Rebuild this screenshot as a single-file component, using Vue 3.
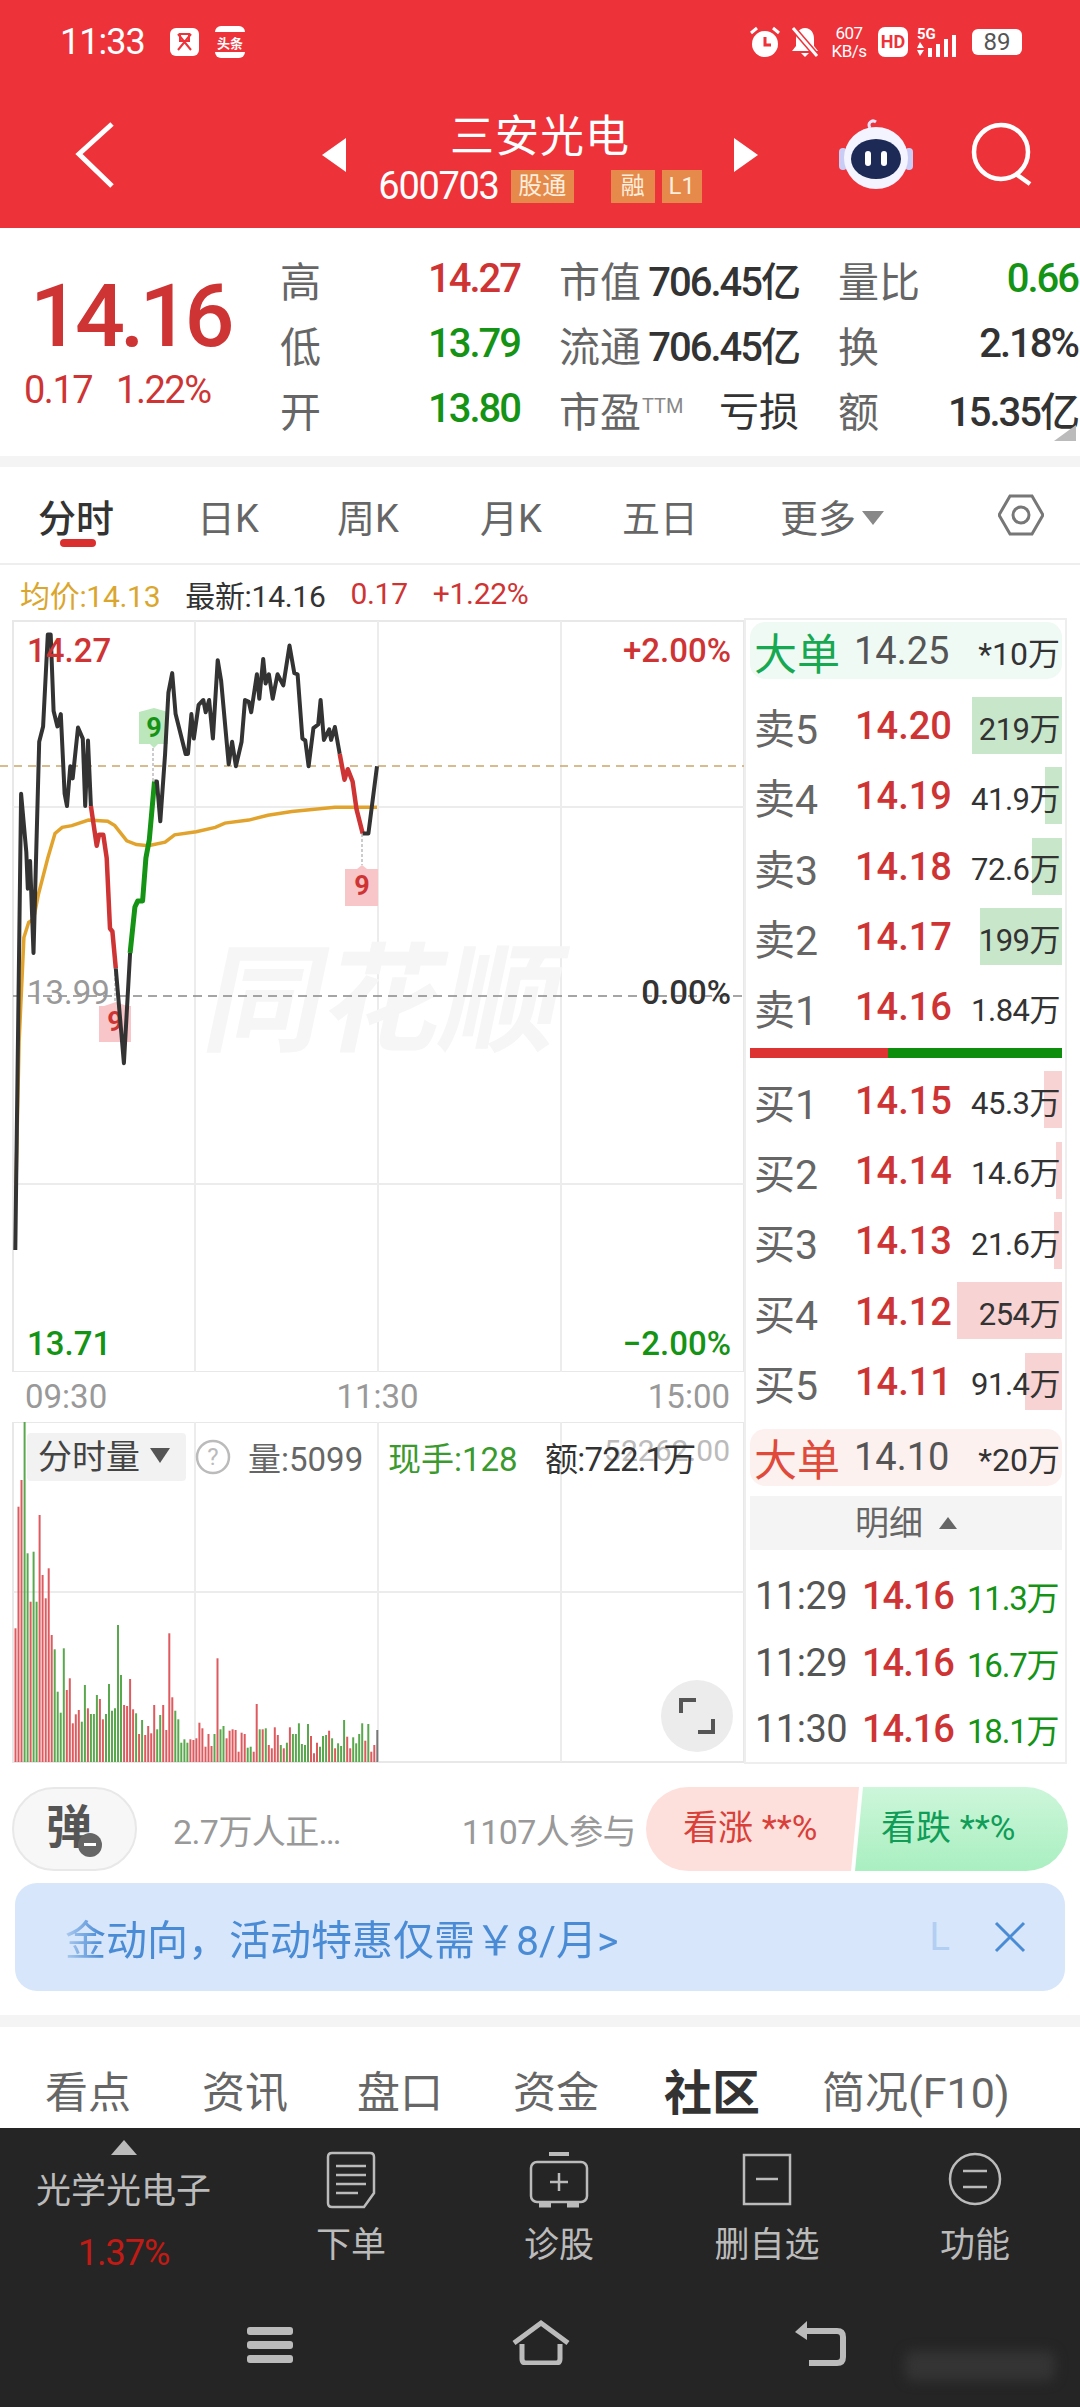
<template>
  <main class="app">
    <header class="head">
      <div class="status">
        <span class="clock">11:33</span>
        <svg class="app-icons" width="80" height="34" viewBox="0 0 80 34">
          <rect x="2" y="3" width="29" height="28" rx="6" fill="#fff" />
          <path d="M10 9l13 16M23 9L10 25M12 9h9v7h-9z" stroke="#ee3239" stroke-width="2" fill="none" />
          <rect x="47" y="1" width="30" height="32" rx="6" fill="#fff" />
          <rect x="47" y="7" width="30" height="20" fill="#ee3239" />
          <text x="62" y="23" class="toutiao">头条</text>
        </svg>
        <div class="status-right">
          <svg width="32" height="32" viewBox="0 0 32 32">
            <circle cx="16" cy="18" r="13" fill="#fff" />
            <path d="M16 11v8h6" stroke="#ee3239" stroke-width="3" fill="none" />
            <path d="M2 7l6-5M30 7l-6-5" stroke="#fff" stroke-width="3" />
          </svg>
          <svg class="bell" width="30" height="32" viewBox="0 0 30 32">
            <path d="M15 2c6 0 9 5 9 11v7l4 5H2l4-5v-7C6 7 9 2 15 2zM11 27h8l-4 4z" fill="#fff" />
            <path d="M3 2l24 28" stroke="#ee3239" stroke-width="6" />
            <path d="M3 2l24 28" stroke="#fff" stroke-width="3" />
          </svg>
          <div class="speed"><span>607</span><span>KB/s</span></div>
          <div class="hd">HD</div>
          <svg width="46" height="32" viewBox="0 0 46 32">
            <text x="0" y="13" class="five-g">5G</text>
            <path d="M3 16l4 6H0zM3 30l-3-6h7z" fill="#fff" />
            <rect x="11" y="22" width="4" height="9" fill="#fff" />
            <rect x="19" y="18" width="4" height="13" fill="#fff" />
            <rect x="27" y="13" width="4" height="18" fill="#fff" />
            <rect x="35" y="9" width="4" height="22" fill="#fff" />
          </svg>
          <div class="battery">89</div>
        </div>
      </div>
      <div class="nav">
        <svg class="back" width="40" height="66" viewBox="0 0 40 66">
          <path d="M37 2L4 32l33 32" fill="none" stroke="#fff" stroke-width="5" />
        </svg>
        <div class="stock">
          <svg width="24" height="34" viewBox="0 0 24 34"><path d="M24 0v34L0 17z" fill="#fff" /></svg>
          <div class="stock-mid">
            <div class="stock-name">三安光电</div>
            <div class="stock-code">
              <span class="code">600703</span>
              <span class="tag tag-wide">股通</span>
              <span class="tag tag-gap">融</span>
              <span class="tag">L1</span>
            </div>
          </div>
          <svg width="24" height="34" viewBox="0 0 24 34"><path d="M0 0v34l24-17z" fill="#fff" /></svg>
        </div>
        <div class="nav-tools">
          <svg width="76" height="72" viewBox="0 0 76 72">
            <path d="M32 10c-3-5 2-9 6-6" stroke="#dfe3fb" stroke-width="3" fill="none" />
            <rect x="1" y="30" width="8" height="22" rx="4" fill="#c9cdf5" />
            <rect x="67" y="30" width="8" height="22" rx="4" fill="#c9cdf5" />
            <ellipse cx="38" cy="40" rx="32" ry="31" fill="#f3f4ff" />
            <ellipse cx="38" cy="41" rx="25" ry="20" fill="#1c2a55" />
            <rect x="27" y="33" width="6" height="15" rx="3" fill="#fff" />
            <rect x="43" y="33" width="6" height="15" rx="3" fill="#fff" />
          </svg>
          <svg width="66" height="66" viewBox="0 0 66 66">
            <circle cx="31" cy="31" r="27" fill="none" stroke="#fff" stroke-width="4.5" />
            <path d="M46 53l14 10" stroke="#fff" stroke-width="4.5" />
          </svg>
        </div>
      </div>
    </header>

    <section class="quote">
      <div class="last">
        <div class="last-price">14.16</div>
        <div class="last-sub"><span>0.17</span><span>1.22%</span></div>
      </div>
      <div class="stats">
        <div v-for="s in stats" :key="s.label" class="stat">
          <span class="stat-label">{{ s.label }}<sup v-if="s.sup">{{ s.sup }}</sup></span>
          <span class="stat-value" :class="s.color">{{ s.value }}</span>
        </div>
      </div>
      <span class="corner"></span>
    </section>

    <nav class="period">
      <span v-for="(t, i) in periods" :key="t" class="period-item" :class="{ on: i === 0 }">{{ t }}</span>
      <span class="period-item more">更多<i class="caret"></i></span>
      <svg width="46" height="46" viewBox="0 0 46 46">
        <path d="M12 4h22l11 19-11 19H12L1 23z" fill="none" stroke="#777" stroke-width="3" />
        <circle cx="23" cy="23" r="8" fill="none" stroke="#777" stroke-width="3" />
      </svg>
    </nav>

    <div class="legend">
      <span class="gold">均价:14.13</span>
      <span class="dark">最新:14.16</span>
      <span class="red">0.17</span>
      <span class="red">+1.22%</span>
    </div>

    <section class="market">
      <div class="left">
        <svg class="chart" width="744" height="754" viewBox="0 618 744 754">
          <rect x="13" y="621" width="731" height="751" fill="none" stroke="#e8e8e8" stroke-width="2" />
          <path d="M195 621v751M378 621v751M561 621v751M13 807h731M13 1184h731" stroke="#ececec" stroke-width="2" />
          <text class="mark-text" transform="translate(200 1042) skewX(-12)">同花顺</text>
          <path d="M0 766h744" stroke="#c9a66b" stroke-width="1.5" stroke-dasharray="8 6" />
          <path d="M13 996h731" stroke="#888" stroke-width="1.5" stroke-dasharray="9 6" />
          <path d="M153 748v36M115 968v34M362 834v31" stroke="#999" stroke-width="1" stroke-dasharray="3 2" />
          <path d="M139 712l15-4 14 4v32h-10l-4 4-4-4h-11z" fill="#bce6bc" />
          <path d="M99 1006l5 0 12-4 11 4h4v36H99z" fill="#f8c6c8" />
          <path d="M345 869l12-0 5-4 5 4h11v37h-33z" fill="#f8c6c8" />
          <text x="154" y="737" class="nine green">9</text>
          <text x="115" y="1031" class="nine red">9</text>
          <text x="362" y="895" class="nine red">9</text>
          <path :d="avgPath" fill="none" stroke="#e2a32d" stroke-width="3.5" />
          <path v-for="(seg, i) in priceSegs" :key="i" :d="seg.d" fill="none" :stroke="seg.color" :stroke-width="seg.w" stroke-linejoin="round" />
          <text x="27" y="662" class="axis red">14.27</text>
          <text x="27" y="1004" class="axis grey">13.99</text>
          <text x="27" y="1355" class="axis green">13.71</text>
          <text x="731" y="662" class="axis red end">+2.00%</text>
          <text x="731" y="1004" class="axis dark end">0.00%</text>
          <text x="731" y="1355" class="axis green end">−2.00%</text>
        </svg>
        <div class="times"><span>09:30</span><span>11:30</span><span>15:00</span></div>
        <div class="volume">
          <svg class="vol-chart" width="744" height="341" viewBox="0 1422 744 341">
            <rect x="13" y="1422" width="731" height="340" fill="none" stroke="#e8e8e8" stroke-width="2" />
            <path d="M195 1422v340M378 1422v340M561 1422v340M13 1592h731" stroke="#ececec" stroke-width="2" />
            <path v-for="(b, i) in volBars" :key="i" :d="b.d" :stroke="b.color" stroke-width="2" />
          </svg>
          <div class="vol-head">
            <div class="vol-pick">分时量<i class="caret dark-caret"></i></div>
            <svg class="help" width="36" height="36" viewBox="0 0 36 36">
              <circle cx="18" cy="18" r="16" fill="none" stroke="#bbb" stroke-width="2.5" />
              <text x="18" y="26" class="help-q">?</text>
            </svg>
            <span class="vol-num">量:5099</span>
            <span class="vol-now">现手:128</span>
            <span class="vol-amt">额:722.1万</span>
            <span class="vol-ghost">52262.00</span>
          </div>
          <div class="expand">
            <svg width="36" height="38" viewBox="0 0 36 38">
              <path d="M2 16V3h15M34 22v13H19" fill="none" stroke="#555" stroke-width="4" />
            </svg>
          </div>
        </div>
      </div>

      <aside class="panel">
        <div class="big big-buy"><b>大单</b><span class="big-price">14.25</span><span class="big-vol">*10万</span></div>
        <div class="book book-first">
          <div v-for="r in sells" :key="r.name" class="book-row">
            <i class="depth depth-sell" :style="{ width: r.depth + 'px' }"></i>
            <span class="book-name">{{ r.name }}</span>
            <span class="book-price">{{ r.price }}</span>
            <span class="book-vol">{{ r.vol }}</span>
          </div>
        </div>
        <div class="ratio"><i></i></div>
        <div class="book">
          <div v-for="r in buys" :key="r.name" class="book-row">
            <i class="depth depth-buy" :style="{ width: r.depth + 'px' }"></i>
            <span class="book-name">{{ r.name }}</span>
            <span class="book-price">{{ r.price }}</span>
            <span class="book-vol">{{ r.vol }}</span>
          </div>
        </div>
        <div class="big big-sell"><b>大单</b><span class="big-price">14.10</span><span class="big-vol">*20万</span></div>
        <div class="detail-head">明细<i class="up"></i></div>
        <div class="detail">
          <div v-for="d in ticks" :key="d.vol" class="tick">
            <span class="tick-time">{{ d.time }}</span>
            <span class="tick-price">14.16</span>
            <span class="tick-vol">{{ d.vol }}</span>
          </div>
        </div>
      </aside>
    </section>

    <section class="vote-row">
      <div class="danmu">
        <span>弹</span>
        <i class="danmu-off"></i>
      </div>
      <span class="hot">2.7万人正…</span>
      <span class="join">1107人参与</span>
      <div class="vote">
        <div class="vote-up">看涨 **%</div>
        <div class="vote-down">看跌 **%</div>
      </div>
    </section>

    <section class="banner">
      <span class="banner-text">金动向，活动特惠仅需￥8/月&gt;</span>
      <span class="banner-ghost">L</span>
      <svg width="32" height="32" viewBox="0 0 32 32">
        <path d="M2 2l28 28M30 2L2 30" stroke="#4a8bd6" stroke-width="3" />
      </svg>
    </section>

    <div class="gap"></div>

    <nav class="sections">
      <span v-for="(s, i) in sections" :key="s" :class="{ active: i === 4 }">{{ s }}</span>
    </nav>

    <section class="toolbar">
      <div class="sector">
        <i class="sector-up"></i>
        <span class="sector-name">光学光电子</span>
        <span class="sector-pct">1.37%</span>
      </div>
      <div class="tool">
        <svg width="50" height="58" viewBox="0 0 50 58">
          <path d="M6 2h38q4 0 4 4v36L38 56H6q-4 0-4-4V6q0-4 4-4z" fill="none" stroke="#bbb" stroke-width="2.5" />
          <path d="M10 15h30M10 24h30M10 33h30M10 42h22" stroke="#bbb" stroke-width="2.5" />
        </svg>
        <span>下单</span>
      </div>
      <div class="tool">
        <svg width="60" height="58" viewBox="0 0 60 58">
          <path d="M20 3h20" stroke="#bbb" stroke-width="4" />
          <rect x="2" y="11" width="56" height="40" rx="6" fill="none" stroke="#bbb" stroke-width="2.5" />
          <path d="M10 54h12M38 54h12" stroke="#bbb" stroke-width="5" />
          <path d="M30 22v18M21 31h18" stroke="#bbb" stroke-width="2.5" />
        </svg>
        <span>诊股</span>
      </div>
      <div class="tool">
        <svg width="50" height="58" viewBox="0 0 50 58">
          <rect x="2" y="4" width="46" height="49" fill="none" stroke="#bbb" stroke-width="2.5" />
          <path d="M14 28h22" stroke="#bbb" stroke-width="2.5" />
        </svg>
        <span>删自选</span>
      </div>
      <div class="tool">
        <svg width="54" height="58" viewBox="0 0 54 58">
          <circle cx="27" cy="28" r="25" fill="none" stroke="#bbb" stroke-width="2.5" />
          <path d="M15 20h24M15 36h24" stroke="#bbb" stroke-width="2.5" />
        </svg>
        <span>功能</span>
      </div>
    </section>

    <footer class="sysnav">
      <svg width="48" height="38" viewBox="0 0 48 38">
        <rect x="1" y="1" width="46" height="8" rx="3" fill="#bbb" />
        <rect x="1" y="15" width="46" height="8" rx="3" fill="#bbb" />
        <rect x="1" y="29" width="46" height="8" rx="3" fill="#bbb" />
      </svg>
      <svg width="60" height="46" viewBox="0 0 60 46">
        <path d="M3 23L30 3l27 20" fill="none" stroke="#bbb" stroke-width="5" transform="translate(0 1)" />
        <path d="M11 25v15q0 4 4 4h30q4 0 4-4V25" fill="none" stroke="#bbb" stroke-width="5" />
      </svg>
      <svg width="52" height="46" viewBox="0 0 52 46">
        <path d="M12 0L0 11l12 8z" fill="#bbb" />
        <path d="M10 10h32q6 0 6 6v20q0 6-6 6H14" fill="none" stroke="#bbb" stroke-width="6" />
      </svg>
      <span class="stamp"></span>
    </footer>
  </main>
</template>

<script setup>
const stats = [
  { label: '高', value: '14.27', color: 'red' },
  { label: '市值', value: '706.45亿', color: 'dark' },
  { label: '量比', value: '0.66', color: 'green' },
  { label: '低', value: '13.79', color: 'green' },
  { label: '流通', value: '706.45亿', color: 'dark' },
  { label: '换', value: '2.18%', color: 'dark' },
  { label: '开', value: '13.80', color: 'green' },
  { label: '市盈', sup: 'TTM', value: '亏损', color: 'dark cjk' },
  { label: '额', value: '15.35亿', color: 'dark' }
]

const periods = ['分时', '日K', '周K', '月K', '五日']
const sections = ['看点', '资讯', '盘口', '资金', '社区', '简况(F10)']

const sells = [
  { name: '卖5', price: '14.20', vol: '219万', depth: 90 },
  { name: '卖4', price: '14.19', vol: '41.9万', depth: 17 },
  { name: '卖3', price: '14.18', vol: '72.6万', depth: 30 },
  { name: '卖2', price: '14.17', vol: '199万', depth: 82 },
  { name: '卖1', price: '14.16', vol: '1.84万', depth: 0 }
]
const buys = [
  { name: '买1', price: '14.15', vol: '45.3万', depth: 18 },
  { name: '买2', price: '14.14', vol: '14.6万', depth: 6 },
  { name: '买3', price: '14.13', vol: '21.6万', depth: 8 },
  { name: '买4', price: '14.12', vol: '254万', depth: 105 },
  { name: '买5', price: '14.11', vol: '91.4万', depth: 37 }
]
const ticks = [
  { time: '11:29', vol: '11.3万' },
  { time: '11:29', vol: '16.7万' },
  { time: '11:30', vol: '18.1万' }
]

// points were read off a zoomed crop, so scale them back to page pixels
const toPath = pts => 'M' + pts.map(([x, y]) => `${(x / 2.09).toFixed(1)} ${(460 + y / 1.633).toFixed(1)}`).join('L')

const black = '#333'
const red = '#cf3434'
const green = '#149314'
const priceSegs = [
  { color: black, w: 4, pts: [[32, 1290], [44, 545], [55, 640], [58, 700], [63, 655], [70, 805], [82, 460], [90, 435], [100, 285], [106, 285], [112, 410], [120, 435], [127, 415], [135, 545], [140, 565], [147, 500], [152, 520], [163, 437], [173, 455], [178, 565], [184, 458], [190, 565]] },
  { color: red, w: 4.5, pts: [[190, 565], [202, 630], [207, 612], [216, 612], [223, 650], [230, 765], [235, 770], [242, 830]] },
  { color: black, w: 4, pts: [[242, 830], [259, 985], [272, 805]] },
  { color: green, w: 5, pts: [[272, 805], [282, 730], [288, 720], [298, 720], [305, 650], [312, 620], [323, 525]] },
  { color: black, w: 4, pts: [[323, 525], [328, 525], [335, 590], [345, 480], [352, 380], [360, 348], [367, 415], [388, 480], [393, 480], [400, 415], [405, 455], [415, 400], [425, 392], [430, 412], [437, 392], [445, 455], [455, 327], [462, 360], [478, 497], [485, 460], [493, 500], [505, 460], [512, 392], [520, 395], [525, 412], [537, 350], [542, 390], [550, 325], [555, 365], [562, 350], [570, 390], [580, 350], [592, 368], [605, 303], [615, 348], [622, 350], [632, 455], [638, 458], [645, 500], [655, 438], [665, 432], [670, 392], [677, 457], [688, 440], [692, 457], [700, 436], [710, 480]] },
  { color: red, w: 4.5, pts: [[710, 480], [720, 522], [727, 505], [737, 525], [745, 570], [758, 610]] },
  { color: black, w: 4, pts: [[758, 610], [770, 610], [788, 500]] }
].map(s => ({ color: s.color, w: s.w, d: toPath(s.pts) }))

const avgPath = toPath([[33, 1200], [40, 950], [50, 780], [60, 755], [70, 750], [80, 710], [100, 650], [115, 610], [130, 600], [150, 597], [185, 588], [225, 590], [240, 597], [265, 622], [285, 628], [310, 630], [345, 624], [365, 612], [410, 607], [450, 600], [470, 593], [520, 588], [560, 580], [610, 574], [700, 567], [788, 567]])

// tops of the volume bars, from the same kind of crop: r = up, g = down, k = flat
const volTops = 'r745 r380 r300 g125 g520 r665 g515 g665 r405 r585 r655 r565 r765 g808 g935 g998 g805 r930 r895 r1030 r1003 r990 g1025 g915 r985 g1002 g1002 g945 r957 r1018 g1002 g912 g992 g985 g735 g885 r975 r978 r897 r988 g1000 r1062 g1020 r1065 r1038 r1060 r975 g1048 g1005 r975 r1050 r760 r952 g992 g1018 g1088 g1078 g1088 r1078 r1080 r1075 r1028 r1045 r1100 r1062 r1098 g1062 r835 g1048 g1038 r1075 r1052 r1048 r1050 r1115 r1058 r1062 g1103 g1100 r1115 r972 g1048 r1048 g1045 r1095 r1105 r1042 r1065 g1095 r1105 g1088 r1042 g1062 g1062 g1030 g1092 g1095 g1032 r1068 r1120 r1088 g1100 g1068 g1065 r1052 g1075 r1105 g1090 g1098 g1020 r1070 r1105 g1072 g1090 g1062 g1030 r1082 g1032 r1115 r1095 k1050'
const volColors = { r: '#de5a5f', g: '#5aa84e', k: '#777' }
const volBars = volTops.split(' ').map((t, i) => {
  const x = ((32 + i * 6.22) / 2.063).toFixed(1)
  const top = (1380 + Number(t.slice(1)) / 3).toFixed(1)
  return { d: `M${x} ${top}V1762`, color: volColors[t[0]] }
})
</script>

<style>
html,
body {
  margin: 0;
  background: #fff;
}
</style>

<style scoped>
.app {
  width: 1080px;
  height: 2408px;
  overflow: hidden;
  background: #fff;
  color: #333;
  font-family: Roboto, "Noto Sans CJK SC", sans-serif;
}

.red { color: #cf3434; fill: #cf3434; }
.green { color: #149314; fill: #149314; }
.dark { color: #333; fill: #333; }
.grey { fill: #999; }
.gold { color: #dba62e; }

/* header */
.head {
  height: 228px;
  background: #ee3239;
  color: #fff;
}
.status {
  height: 84px;
  display: flex;
  align-items: center;
  padding: 0 60px;
}
.clock {
  font-size: 36px;
  letter-spacing: -1px;
  width: 108px;
}
.toutiao {
  font-size: 13px;
  font-weight: 700;
  fill: #fff;
  text-anchor: middle;
}
.status-right {
  margin-left: auto;
  display: flex;
  align-items: center;
  gap: 9px;
  margin-right: -2px;
}
.speed {
  display: flex;
  flex-direction: column;
  align-items: center;
  font-size: 17px;
  line-height: 18px;
  letter-spacing: -0.5px;
  width: 40px;
}
.hd {
  width: 30px;
  height: 30px;
  line-height: 30px;
  border-radius: 7px;
  background: #fff;
  color: #ee3239;
  font-size: 18px;
  font-weight: 700;
  text-align: center;
}
.five-g {
  font-size: 15px;
  font-weight: 700;
  fill: #fff;
}
.battery {
  width: 50px;
  height: 26px;
  line-height: 26px;
  border-radius: 6px;
  background: #fff;
  color: #555;
  font-size: 24px;
  text-align: center;
}
.nav {
  display: grid;
  grid-template-columns: 322px 436px 1fr;
  height: 144px;
  align-items: start;
}
.back {
  margin: 38px 0 0 75px;
}
.stock {
  display: flex;
  justify-content: space-between;
  align-items: center;
  height: 114px;
  padding-top: 14px;
}
.stock-mid {
  display: flex;
  flex-direction: column;
  align-items: center;
}
.stock-name {
  font-size: 44px;
  line-height: 60px;
  letter-spacing: 1px;
}
.stock-code {
  display: flex;
  align-items: center;
  margin-top: 2px;
  height: 34px;
}
.code {
  font-size: 38px;
  letter-spacing: -1.3px;
  margin-right: 12px;
}
.tag {
  height: 33px;
  line-height: 33px;
  min-width: 34px;
  padding: 0 3px;
  margin-left: 7px;
  background: #e68a4b;
  color: #fdeedd;
  font-size: 24px;
  text-align: center;
}
.tag-wide {
  width: 57px;
  margin-left: 0;
}
.tag-gap {
  width: 38px;
  margin-left: 37px;
}
.nav-tools {
  display: flex;
  align-items: center;
  gap: 56px;
  padding: 34px 0 0 80px;
}

/* quote */
.quote {
  position: relative;
  display: flex;
  height: 228px;
  box-sizing: border-box;
  border-bottom: 11px solid #f4f4f4;
  height: 239px;
}
.last {
  width: 280px;
  padding-top: 40px;
  color: #cf3434;
}
.last-price {
  margin-left: 30px;
  font-size: 88px;
  line-height: 96px;
  font-weight: 500;
  letter-spacing: -5px;
}
.last-sub {
  display: flex;
  gap: 24px;
  margin: 4px 0 0 24px;
  font-size: 38px;
  line-height: 44px;
  letter-spacing: -1.5px;
}
.stats {
  display: grid;
  grid-template-columns: 240px 240px 240px;
  column-gap: 39px;
  grid-auto-rows: 65px;
  padding-top: 18px;
}
.stat {
  display: flex;
  justify-content: space-between;
  align-items: center;
}
.stat-label {
  color: #666;
  font-size: 41px;
}
.stat-label sup {
  font-size: 20px;
  color: #888;
  vertical-align: 14px;
  line-height: 0;
  margin-left: 1px;
}
.stat-value {
  font-size: 40px;
  font-weight: 500;
  letter-spacing: -2px;
}
.stat-value.cjk {
  letter-spacing: 0;
  font-weight: 400;
}
.corner {
  position: absolute;
  right: 4px;
  top: 197px;
  border-style: solid;
  border-width: 0 0 16px 22px;
  border-color: transparent transparent #bbb transparent;
}

/* period tabs */
.period {
  display: grid;
  grid-template-columns: 159px 140px 143px 142px 158px 218px 46px;
  align-items: center;
  height: 98px;
  padding-left: 38px;
  box-sizing: border-box;
  border-bottom: 2px solid #eee;
}
.period-item {
  position: relative;
  font-size: 38px;
  color: #666;
  white-space: nowrap;
}
.period-item.on {
  color: #333;
  font-weight: 500;
}
.period-item.on::after {
  content: "";
  position: absolute;
  left: 22px;
  top: 51px;
  width: 36px;
  height: 8px;
  border-radius: 4px;
  background: #d9302f;
}
.caret {
  display: inline-block;
  margin-left: 6px;
  vertical-align: 7px;
  border-style: solid;
  border-width: 14px 11px 0;
  border-color: #888 transparent transparent;
}
.dark-caret {
  border-color: #555 transparent transparent;
  border-width: 15px 10px 0;
  vertical-align: 6px;
  margin-left: 10px;
}

.legend {
  display: flex;
  height: 53px;
  align-items: center;
  font-size: 30px;
  padding: 4px 0 0 20px;
  box-sizing: border-box;
}
.legend span {
  margin-right: 25px;
  letter-spacing: -0.3px;
}

/* chart + order book */
.market {
  display: flex;
  height: 1145px;
}
.left {
  width: 744px;
  flex: none;
}
.chart,
.vol-chart {
  display: block;
}
.axis {
  font-size: 33px;
  font-weight: 500;
}
.axis.grey {
  font-weight: 400;
}
.axis.end {
  text-anchor: end;
}
.nine {
  font-size: 27px;
  font-weight: 700;
  text-anchor: middle;
}
.mark-text {
  font-size: 118px;
  font-weight: 700;
  fill: #f6f6f6;
}
.times {
  display: flex;
  justify-content: space-between;
  height: 50px;
  line-height: 50px;
  padding: 0 14px 0 25px;
  color: #999;
  font-size: 33px;
}
.volume {
  position: relative;
}
.vol-head {
  position: absolute;
  left: 27px;
  top: 11px;
  right: 0;
  display: flex;
  align-items: center;
  height: 48px;
  white-space: nowrap;
  font-size: 33px;
}
.vol-pick {
  width: 159px;
  height: 48px;
  line-height: 48px;
  padding-left: 11px;
  box-sizing: border-box;
  background: #f2f2f2;
  border-radius: 4px;
  color: #444;
  font-size: 34px;
}
.help {
  margin-left: 9px;
}
.help-q {
  font-size: 24px;
  fill: #bbb;
  text-anchor: middle;
}
.vol-num {
  position: absolute;
  left: 221px;
  color: #666;
}
.vol-now {
  position: absolute;
  left: 361px;
  color: #3a9a2e;
}
.vol-amt {
  position: absolute;
  left: 518px;
  color: #333;
  z-index: 1;
  letter-spacing: -0.8px;
}
.vol-ghost {
  position: absolute;
  right: 14px;
  top: 0;
  color: #bbb;
  font-size: 30px;
}
.expand {
  position: absolute;
  left: 661px;
  top: 258px;
  width: 72px;
  height: 72px;
  border-radius: 50%;
  background: #ececec;
  display: flex;
  align-items: center;
  justify-content: center;
}

.panel {
  width: 323px;
  flex: none;
  box-sizing: border-box;
  height: 1146px;
  border: 2px solid #eee;
  padding: 2px 3px 0 4px;
}
.big {
  display: flex;
  align-items: center;
  height: 57px;
  border-radius: 15px;
  padding: 0 2px 0 4px;
  white-space: nowrap;
}
.big b {
  font-weight: 400;
  font-size: 43px;
}
.big-price {
  margin-left: 14px;
  width: 100px;
  color: #555;
  font-size: 38px;
}
.big-vol {
  margin-left: auto;
  color: #333;
  font-size: 32px;
}
.big-buy {
  background: #f0faf5;
}
.big-buy b {
  color: #17a852;
}
.big-sell {
  background: #fdf1f0;
  margin-top: 12px;
}
.big-sell b {
  color: #e04a3a;
}
.book-first {
  margin-top: 12px;
}
.book-row {
  position: relative;
  display: flex;
  align-items: center;
  height: 70.3px;
  padding: 0 2px 0 4px;
  white-space: nowrap;
}
.depth {
  position: absolute;
  right: 0;
  top: 6px;
  height: 57px;
}
.depth-sell {
  background: #c8e6c9;
}
.depth-buy {
  background: #f8d3d3;
}
.book-name {
  position: relative;
  width: 101px;
  color: #666;
  font-size: 41px;
}
.book-price {
  position: relative;
  color: #cf3434;
  font-size: 38px;
  font-weight: 500;
}
.book-vol {
  position: relative;
  margin-left: auto;
  color: #333;
  font-size: 31px;
  letter-spacing: -0.5px;
}
.ratio {
  height: 10px;
  margin-top: 6px;
  margin-bottom: 7px;
  background: #0d8f0d;
}
.ratio i {
  display: block;
  width: 138px;
  height: 100%;
  background: #dd3333;
}
.detail-head {
  height: 54px;
  line-height: 54px;
  margin-top: 10px;
  background: #f4f4f4;
  color: #666;
  font-size: 34px;
  text-align: center;
}
.up {
  display: inline-block;
  margin-left: 16px;
  vertical-align: 6px;
  border-style: solid;
  border-width: 0 9px 12px;
  border-color: transparent transparent #666;
}
.detail {
  margin-top: 13px;
}
.tick {
  display: flex;
  align-items: center;
  height: 66.5px;
  padding-left: 5px;
  white-space: nowrap;
}
.tick-time {
  width: 107px;
  color: #555;
  font-size: 38px;
  letter-spacing: -0.5px;
}
.tick-price {
  width: 105px;
  color: #cf3434;
  font-size: 38px;
  letter-spacing: -1px;
  font-weight: 500;
}
.tick-vol {
  color: #149314;
  font-size: 33px;
  letter-spacing: -1.2px;
}

/* vote + banner */
.vote-row {
  display: flex;
  align-items: center;
  height: 84px;
  margin-top: 24px;
  padding: 0 12px;
  white-space: nowrap;
  font-size: 34px;
  color: #999;
}
.danmu {
  position: relative;
  width: 125px;
  height: 84px;
  box-sizing: border-box;
  border: 2px solid #e8e8e8;
  border-radius: 42px;
  background: #f7f7f7;
  color: #555;
  font-size: 46px;
  font-weight: 700;
  line-height: 76px;
  padding-left: 32px;
}
.danmu-off {
  position: absolute;
  left: 64px;
  top: 44px;
  width: 24px;
  height: 24px;
  border-radius: 50%;
  background: #666;
}
.danmu-off::after {
  content: "";
  position: absolute;
  left: 6px;
  top: 10px;
  width: 12px;
  height: 3px;
  background: #fff;
}
.hot {
  margin-left: 36px;
  letter-spacing: -0.6px;
}
.join {
  margin-left: auto;
  letter-spacing: -0.6px;
}
.vote {
  display: flex;
  margin-left: 10px;
  height: 84px;
  font-size: 35px;
}
.vote-up,
.vote-down {
  width: 213px;
  line-height: 84px;
}
.vote-up {
  background: #fde0dc;
  color: #d9403a;
  border-radius: 42px 0 0 42px;
  padding-left: 37px;
  box-sizing: border-box;
  clip-path: polygon(0 0, 100% 0, calc(100% - 8px) 100%, 0 100%);
}
.vote-down {
  margin-left: -4px;
  background: linear-gradient(#cdf6da, #a9efc0);
  color: #0f9d58;
  border-radius: 0 42px 42px 0;
  padding-left: 26px;
  box-sizing: border-box;
  clip-path: polygon(8px 0, 100% 0, 100% 100%, 0 100%);
}
.banner {
  display: flex;
  align-items: center;
  height: 108px;
  margin: 12px 15px 0;
  padding: 0 39px 0 50px;
  border-radius: 22px;
  background: #d7e6fa;
  color: #4a8bd6;
}
.banner-text {
  font-size: 41px;
  white-space: nowrap;
  -webkit-mask-image: linear-gradient(90deg, rgba(0, 0, 0, 0.3), #000 36px);
  mask-image: linear-gradient(90deg, rgba(0, 0, 0, 0.3), #000 36px);
}
.banner-ghost {
  margin-left: auto;
  margin-right: 44px;
  color: #b2cef2;
  font-size: 38px;
}
.gap {
  height: 12px;
  margin-top: 24px;
  background: #f4f4f4;
}
.sections {
  display: grid;
  grid-template-columns: 157px 155px 156px 151px 158px 1fr;
  align-items: center;
  height: 101px;
  padding: 22px 0 0 45px;
  box-sizing: border-box;
  font-size: 43px;
  color: #666;
  white-space: nowrap;
}
.sections .active {
  color: #333;
  font-size: 48px;
  font-weight: 700;
}

/* bottom bars */
.toolbar {
  display: grid;
  grid-template-columns: 247px repeat(4, 208px);
  height: 181px;
  background: #252525;
  color: #bbb;
}
.sector {
  display: flex;
  flex-direction: column;
  align-items: center;
  padding-top: 12px;
}
.sector-up {
  border-style: solid;
  border-width: 0 13px 15px;
  border-color: transparent transparent #bbb;
}
.sector-name {
  margin-top: 14px;
  font-size: 35px;
  line-height: 46px;
}
.sector-pct {
  margin-top: 15px;
  color: #c21a14;
  font-size: 36px;
  line-height: 46px;
  letter-spacing: -1px;
}
.tool {
  display: flex;
  flex-direction: column;
  align-items: center;
  padding-top: 23px;
  font-size: 35px;
}
.tool span {
  margin-top: 7px;
}
.sysnav {
  position: relative;
  display: grid;
  grid-template-columns: 246px 48px 217px 60px 224px 52px;
  height: 98px;
  background: #252525;
  align-items: start;
  padding-top: 10px;
  box-sizing: border-box;
}
.sysnav svg:nth-child(1) {
  grid-column: 2;
  margin-top: 7px;
}
.sysnav svg:nth-child(2) {
  grid-column: 4;
}
.sysnav svg:nth-child(3) {
  grid-column: 6;
  margin-top: 2px;
}
.stamp {
  position: absolute;
  left: 905px;
  top: 42px;
  width: 150px;
  height: 30px;
  border-radius: 8px;
  background: #343434;
  filter: blur(6px);
}
</style>
